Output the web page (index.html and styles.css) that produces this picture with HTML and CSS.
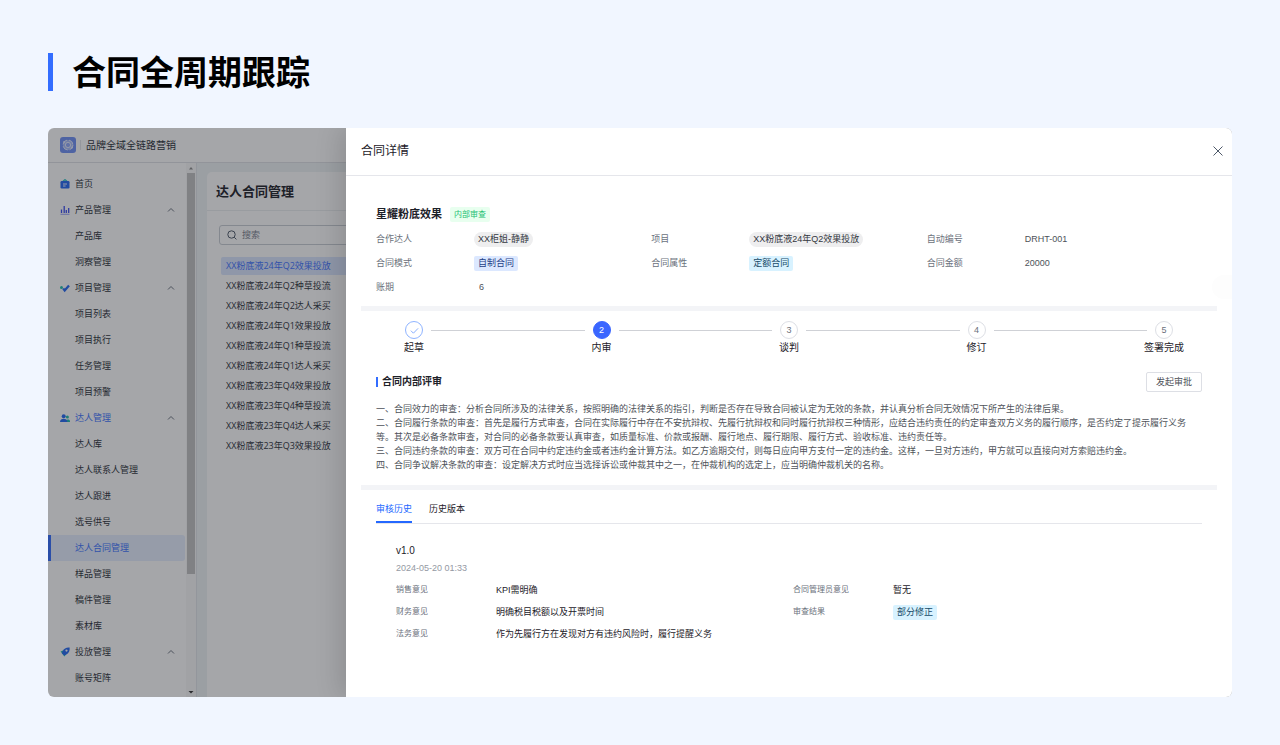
FILE: index.html
```html
<!DOCTYPE html>
<html lang="zh-CN">
<head>
<meta charset="utf-8">
<meta name="viewport" content="width=device-width, initial-scale=1">
<title>合同全周期跟踪</title>
<link rel="stylesheet" href="styles.css">
</head>
<body>
<h1 class="page-title">合同全周期跟踪</h1>
<div class="window">
  <div class="app">
    <header class="topbar">
      <svg class="logo" viewBox="0 0 16 16" aria-hidden="true">
        <rect width="16" height="16" rx="3" fill="#6f8ff5"/>
        <circle cx="8" cy="8" r="5" fill="#a9bdfb" stroke="#e4ebff" stroke-width="1" stroke-dasharray="6 2"/>
        <circle cx="8" cy="8" r="2.6" fill="#8fa8fa" stroke="#e4ebff" stroke-width="1"/>
        <circle cx="4.2" cy="5" r="1" fill="#e4ebff"/><circle cx="12" cy="10.6" r="1" fill="#e4ebff"/>
      </svg>
      <span class="brand">品牌全域全链路营销</span>
    </header>
    <div class="workspace">
      <nav class="menu">
        <a class="menu-item" href="#"><svg class="menu-icon" viewBox="0 0 10 10"><path d="M3 2.2 5 .6l2 1.6" fill="none" stroke="#2bc4c4" stroke-width="1.2"/><rect x=".5" y="2" width="9" height="7.4" rx="1.2" fill="#2468f2"/><path d="M3 5h4M3 7h2.6" stroke="#fff" stroke-width=".9"/></svg>首页</a>
        <a class="menu-item" href="#"><svg class="menu-icon" viewBox="0 0 10 10"><path d="M1.5 4.5V8M4.2 1v7M6.3 5v3M8.7 3v5" stroke="#3a4cf0" stroke-width="1.3"/><path d="M.5 9.3h9" stroke="#8f9af5" stroke-width=".9"/></svg>产品管理<svg class="chevron" viewBox="0 0 8 8"><path d="M1 5.5 4 2.5l3 3"/></svg></a>
        <a class="menu-item" href="#">产品库</a>
        <a class="menu-item" href="#">洞察管理</a>
        <a class="menu-item" href="#"><svg class="menu-icon" viewBox="0 0 10 10"><path d="M3.2 5.600 4.700 7.400 9 2.600" fill="none" stroke="#2468f2" stroke-width="2.300"/><circle cx="1.500" cy="4.400" r="1.500" fill="#1fbfae"/></svg>项目管理<svg class="chevron" viewBox="0 0 8 8"><path d="M1 5.5 4 2.5l3 3"/></svg></a>
        <a class="menu-item" href="#">项目列表</a>
        <a class="menu-item" href="#">项目执行</a>
        <a class="menu-item" href="#">任务管理</a>
        <a class="menu-item" href="#">项目预警</a>
        <a class="menu-item is-open" href="#"><svg class="menu-icon" viewBox="0 0 10 10"><circle cx="7.4" cy="4" r="1.5" fill="#1fbfae"/><path d="M6 9V7.4c1-1.600 4-1.200 4 .6v1z" fill="#1fbfae"/><circle cx="3.7" cy="3.200" r="2" fill="#2468f2"/><path d="M0 9c0-4.400 7.400-4.400 7.400 0z" fill="#2468f2"/></svg>达人管理<svg class="chevron" viewBox="0 0 8 8"><path d="M1 5.5 4 2.5l3 3"/></svg></a>
        <a class="menu-item" href="#">达人库</a>
        <a class="menu-item" href="#">达人联系人管理</a>
        <a class="menu-item" href="#">达人跟进</a>
        <a class="menu-item" href="#">选号供号</a>
        <a class="menu-item is-current" href="#" aria-current="page">达人合同管理</a>
        <a class="menu-item" href="#">样品管理</a>
        <a class="menu-item" href="#">稿件管理</a>
        <a class="menu-item" href="#">素材库</a>
        <a class="menu-item" href="#"><svg class="menu-icon" viewBox="0 0 10 10"><path d="M.6 4.600 3 3.600 6 7.400 4.400 9.600z" fill="#1fbfae"/><path d="M9.600.6c-3-.4-5.600 1-7 3.600l-.8 2L4.200 8.400l2.200-.8C9 6 10 3.400 9.600.6z" fill="#2468f2"/><circle cx="6.500" cy="3.600" r="1.100" fill="#fff"/></svg>投放管理<svg class="chevron" viewBox="0 0 8 8"><path d="M1 5.5 4 2.5l3 3"/></svg></a>
        <a class="menu-item" href="#">账号矩阵</a>
      </nav>
      <div class="scrollbar" aria-hidden="true">
        <svg class="scroll-arrow" viewBox="0 0 10 10"><path d="M3 6.500h4L5 4z" fill="#8a8a8a"/></svg>
        <div class="scroll-track"><div class="scroll-thumb"></div></div>
        <svg class="scroll-arrow" viewBox="0 0 10 10"><path d="M2.500 4h5L5 6.500z" fill="#333"/></svg>
      </div>
      <main class="content">
        <section class="panel">
          <h2 class="panel-title">达人合同管理</h2>
          <div class="panel-body">
            <label class="search">
              <svg class="search-icon" viewBox="0 0 10 10"><circle cx="4.500" cy="4.500" r="3.700"/><path d="m7.200 7.200 2.200 2.200"/></svg>
              <input class="search-input" type="search" placeholder="搜索" aria-label="搜索">
            </label>
            <ul class="contracts">
              <li class="contract is-selected">XX粉底液24年Q2效果投放</li>
              <li class="contract">XX粉底液24年Q2种草投流</li>
              <li class="contract">XX粉底液24年Q2达人采买</li>
              <li class="contract">XX粉底液24年Q1效果投放</li>
              <li class="contract">XX粉底液24年Q1种草投流</li>
              <li class="contract">XX粉底液24年Q1达人采买</li>
              <li class="contract">XX粉底液23年Q4效果投放</li>
              <li class="contract">XX粉底液23年Q4种草投流</li>
              <li class="contract">XX粉底液23年Q4达人采买</li>
              <li class="contract">XX粉底液23年Q3效果投放</li>
            </ul>
          </div>
        </section>
      </main>
    </div>
  </div>
  <div class="mask"></div>
  <aside class="drawer" role="dialog" aria-labelledby="drawer-title">
    <header class="drawer-head">
      <h2 class="drawer-title" id="drawer-title">合同详情</h2>
      <button class="close" type="button" aria-label="关闭"><svg class="close-icon" viewBox="0 0 10 10"><path d="m.5.5 9 9m0-9-9 9"/></svg></button>
    </header>
    <div class="drawer-body">
      <section class="summary">
        <div class="summary-head"><h3 class="summary-title">星耀粉底效果</h3><span class="tag tag-green">内部审查</span></div>
        <dl class="facts">
          <div class="fact"><dt class="fact-label">合作达人</dt><dd class="fact-value"><span class="tag tag-pill">XX柜姐-静静</span></dd></div>
          <div class="fact"><dt class="fact-label">项目</dt><dd class="fact-value"><span class="tag tag-pill">XX粉底液24年Q2效果投放</span></dd></div>
          <div class="fact"><dt class="fact-label">自动编号</dt><dd class="fact-value">DRHT-001</dd></div>
          <div class="fact"><dt class="fact-label">合同模式</dt><dd class="fact-value"><span class="tag tag-blue">自制合同</span></dd></div>
          <div class="fact"><dt class="fact-label">合同属性</dt><dd class="fact-value"><span class="tag tag-cyan">定额合同</span></dd></div>
          <div class="fact"><dt class="fact-label">合同金额</dt><dd class="fact-value">20000</dd></div>
          <div class="fact"><dt class="fact-label">账期</dt><dd class="fact-value fact-inset">6</dd></div>
        </dl>
      </section>
      <section class="review">
        <ol class="steps">
          <li class="step"><span class="dot is-done"><svg class="check" viewBox="0 0 10 10"><path d="m1 5.200 2.800 2.800L9 2.600"/></svg></span>起草</li>
          <li class="rail" role="presentation"></li>
          <li class="step" aria-current="step"><span class="dot is-active">2</span>内审</li>
          <li class="rail" role="presentation"></li>
          <li class="step"><span class="dot">3</span>谈判</li>
          <li class="rail" role="presentation"></li>
          <li class="step"><span class="dot">4</span>修订</li>
          <li class="rail" role="presentation"></li>
          <li class="step"><span class="dot">5</span>签署完成</li>
        </ol>
        <div class="review-head"><h3 class="review-title">合同内部评审</h3><button class="button" type="button">发起审批</button></div>
        <div class="clauses">
          <p class="clause">一、合同效力的审查：分析合同所涉及的法律关系，按照明确的法律关系的指引，判断是否存在导致合同被认定为无效的条款，并认真分析合同无效情况下所产生的法律后果。</p>
          <p class="clause">二、合同履行条款的审查：首先是履行方式审查，合同在实际履行中存在不安抗辩权、先履行抗辩权和同时履行抗辩权三种情形，应结合违约责任的约定审查双方义务的履行顺序，是否约定了提示履行义务等。其次是必备条款审查，对合同的必备条款要认真审查，如质量标准、价款或报酬、履行地点、履行期限、履行方式、验收标准、违约责任等。</p>
          <p class="clause">三、合同违约条款的审查：双方可在合同中约定违约金或者违约金计算方法。如乙方逾期交付，则每日应向甲方支付一定的违约金。这样，一旦对方违约，甲方就可以直接向对方索赔违约金。</p>
          <p class="clause">四、合同争议解决条款的审查：设定解决方式时应当选择诉讼或仲裁其中之一，在仲裁机构的选定上，应当明确仲裁机关的名称。</p>
        </div>
      </section>
      <section class="history">
        <div class="tabs" role="tablist">
          <button class="tab is-active" type="button" role="tab" aria-selected="true">审核历史</button>
          <button class="tab" type="button" role="tab" aria-selected="false">历史版本</button>
        </div>
        <div class="version">
          <h4 class="version-name">v1.0</h4>
          <time class="version-time" datetime="2024-05-20T01:33">2024-05-20 01:33</time>
          <dl class="opinions">
            <div class="opinion"><dt class="opinion-label">销售意见</dt><dd class="opinion-value">KPI需明确</dd></div>
            <div class="opinion"><dt class="opinion-label">合同管理员意见</dt><dd class="opinion-value">暂无</dd></div>
            <div class="opinion"><dt class="opinion-label">财务意见</dt><dd class="opinion-value">明确税目税额以及开票时间</dd></div>
            <div class="opinion"><dt class="opinion-label">审查结果</dt><dd class="opinion-value"><span class="tag tag-cyan">部分修正</span></dd></div>
            <div class="opinion"><dt class="opinion-label">法务意见</dt><dd class="opinion-value">作为先履行方在发现对方有违约风险时，履行提醒义务</dd></div>
          </dl>
        </div>
      </section>
    </div>
    <span class="handle"></span>
  </aside>
</div>
</body>
</html>
```
FILE: styles.css
```css
* { box-sizing: border-box; }
h1, h2, h3, h4, p, ul, ol, dl, dd { margin: 0; padding: 0; }
ul, ol { list-style: none; }
button, input { font: inherit; color: inherit; }
svg { display: block; flex: none; }

body {
  margin: 0;
  min-height: 100vh;
  padding: 53px 48px 48px;
  background: #f1f6ff;
  color: #1d2129;
  font: 9px/14px "Liberation Sans", "Noto Sans CJK SC", sans-serif;
}

.page-title {
  margin-bottom: 37px;
  padding: 2px 0 0 19px;
  border-left: 5px solid #336dff;
  color: #000;
  font-size: 34px;
  font-weight: 700;
  line-height: 36px;
}

.window {
  position: relative;
  overflow: hidden;
  border-radius: 6px;
  background: #fff;
}

/* Application behind the drawer */
.app { color: #2b3039; font-family: "Open Sans", "Noto Sans CJK SC", sans-serif; }
.topbar {
  display: flex;
  align-items: center;
  height: 35px;
  padding-left: 12px;
  border-bottom: 1px solid #dfe2e6;
}
.logo { width: 16px; height: 16px; }
.brand {
  margin-left: 4px;
  padding-left: 5px;
  border-left: 1px solid #e5e6eb;
  font-size: 10px;
  line-height: 10px;
}
.workspace { display: flex; }
.menu { width: 138px; padding: 8px 1px 6px 0; }
.menu-item {
  display: flex;
  align-items: center;
  height: 26px;
  padding: 0 10px 0 27px;
  color: inherit;
  text-decoration: none;
}
.menu-item:has(.menu-icon) { padding-left: 12px; }
.menu-icon { width: 10px; height: 10px; margin-right: 5px; }
.chevron { width: 8px; height: 8px; margin-left: auto; }
.chevron path { fill: none; stroke: #6b7280; stroke-width: 1; }
.menu-item.is-open { color: #3d72ff; }
.menu-item.is-current {
  padding-left: 24px;
  border-left: 3px solid #336dff;
  border-radius: 0 3px 3px 0;
  background: #e6efff;
  color: #3d72ff;
}
.scrollbar {
  display: flex;
  flex-direction: column;
  width: 11px;
  border-right: 1px solid #e2e5ea;
  background: #f8f8f8;
}
.scroll-arrow { width: 10px; height: 10px; }
.scroll-track { flex: 1; padding: 0 1px; }
.scroll-thumb { height: 78%; background: #c1c1c1; }
.content { flex: 1; padding: 9px 10px 0; background: #eff4f6; }
.panel { height: 100%; border-radius: 5px 5px 0 0; background: #fff; }
.panel-title {
  padding: 0 9px;
  border-bottom: 1px solid #eceef1;
  color: #1d2129;
  font-size: 13px;
  font-weight: 700;
  line-height: 38px;
}
.panel-body { padding: 14px 12px; }
.search {
  display: flex;
  align-items: center;
  gap: 5px;
  height: 20px;
  padding: 0 7px;
  border: 1px solid #c9cdd4;
  border-radius: 3px;
}
.search-icon { width: 10px; height: 10px; }
.search-icon * { fill: none; stroke: #4e5969; stroke-width: 1; }
.search-input { flex: 1; min-width: 0; padding: 0; border: 0; outline: 0; background: none; }
.search-input::placeholder { color: #7a8190; opacity: 1; }
.contracts { padding: 12px 2px; }
.contract { height: 18px; margin-bottom: 2px; padding: 0 5px; border-radius: 2px; line-height: 18px; }
.is-selected { background: #dbe7ff; color: #3d72ff; }

.mask { position: absolute; inset: 0; background: rgba(29, 33, 41, .4); }

/* Drawer */
.drawer {
  position: absolute;
  inset: 0 0 0 298px;
  background: #fff;
  box-shadow: -6px 0 24px rgba(0, 0, 0, .14);
}
.drawer-head {
  display: flex;
  align-items: center;
  justify-content: space-between;
  height: 48px;
  padding: 0 9px 2px 15px;
  border-bottom: 1px solid #e5e6eb;
}
.drawer-title { font-size: 12px; font-weight: 400; line-height: 20px; }
.close { padding: 0; border: 0; background: none; }
.close-icon { width: 10px; height: 10px; }
.close-icon path { fill: none; stroke: #4e5969; stroke-width: 1; }
.drawer-body { padding: 0 15px; }
.summary, .review { padding: 0 15px; border-bottom: 5px solid #f3f4f7; }
.summary { padding-top: 30px; padding-bottom: 7px; }
.summary-head { display: flex; align-items: center; gap: 8px; height: 16px; margin-bottom: 5px; }
.summary-title { font-size: 11px; font-weight: 700; }
.facts { display: grid; grid-template-columns: repeat(3, 1fr); }
.fact { display: flex; align-items: center; height: 24px; }
.fact-label { width: 98px; color: #6b717c; }
.fact-value { color: #4e5259; }
.fact-inset { padding-left: 5px; }

.tag { display: block; padding: 0 4px; border-radius: 2px; line-height: 15px; }
.tag-green { background: #e8ffef; color: #1dbf73; font-size: 8px; }
.tag-pill { border-radius: 8px; background: #eeeeef; color: #33373e; }
.tag-blue { background: #dce8ff; color: #1e3f86; }
.tag-cyan { background: #d8f2ff; color: #164a68; }

.steps { display: flex; padding: 10px 21px 0; font-size: 10px; }
.step { display: flex; flex-direction: column; align-items: center; gap: 1px; width: 34px; line-height: 15px; white-space: nowrap; }
.rail { flex: 1; height: 1px; margin-top: 9px; background: #cfd1d6; }
.dot {
  display: flex;
  align-items: center;
  justify-content: center;
  width: 18px;
  height: 18px;
  border: 1px solid #dddfe5;
  border-radius: 50%;
  color: #6b717c;
  font-size: 9px;
}
.is-done { border-color: #8fb4ff; }
.dot.is-active { border-color: #3a66ff; background: #3a66ff; color: #fff; }
.check { width: 9px; height: 9px; }
.check path { fill: none; stroke: #7aa5ff; stroke-width: 1; }

.review { padding-bottom: 13px; }
.review-head { display: flex; align-items: center; justify-content: space-between; margin: 17px 0 10px; }
.review-title { padding-left: 4px; border-left: 2px solid #336dff; font-size: 10px; font-weight: 700; line-height: 10px; }
.button {
  height: 20px;
  padding: 0 9px;
  border: 1px solid #dddfe5;
  border-radius: 2px;
  background: #fff;
  color: #4e5259;
}
.clauses { color: #4e5259; }

.history { padding: 12px 15px 0; }
.tabs { display: flex; gap: 17px; border-bottom: 1px solid #e5e6eb; }
.tab { padding: 0 0 5px; border: 0; border-bottom: 2px solid transparent; background: none; }
.tab.is-active { border-color: #2468ff; color: #2468ff; }
.version { padding: 20px 12px 0 20px; }
.version-name { font-size: 10px; font-weight: 400; }
.version-time { display: block; margin-top: 3px; color: #9499a3; }
.opinions { display: grid; grid-template-columns: repeat(2, 1fr); margin-top: 4px; }
.opinion { display: flex; align-items: center; height: 22px; }
.opinion-label { width: 100px; color: #6b717c; font-size: 8px; }
.handle {
  position: absolute;
  top: 147px;
  right: 0;
  width: 20px;
  height: 24px;
  border-radius: 12px 0 0 12px;
  background: #fdfdfd;
}
```
